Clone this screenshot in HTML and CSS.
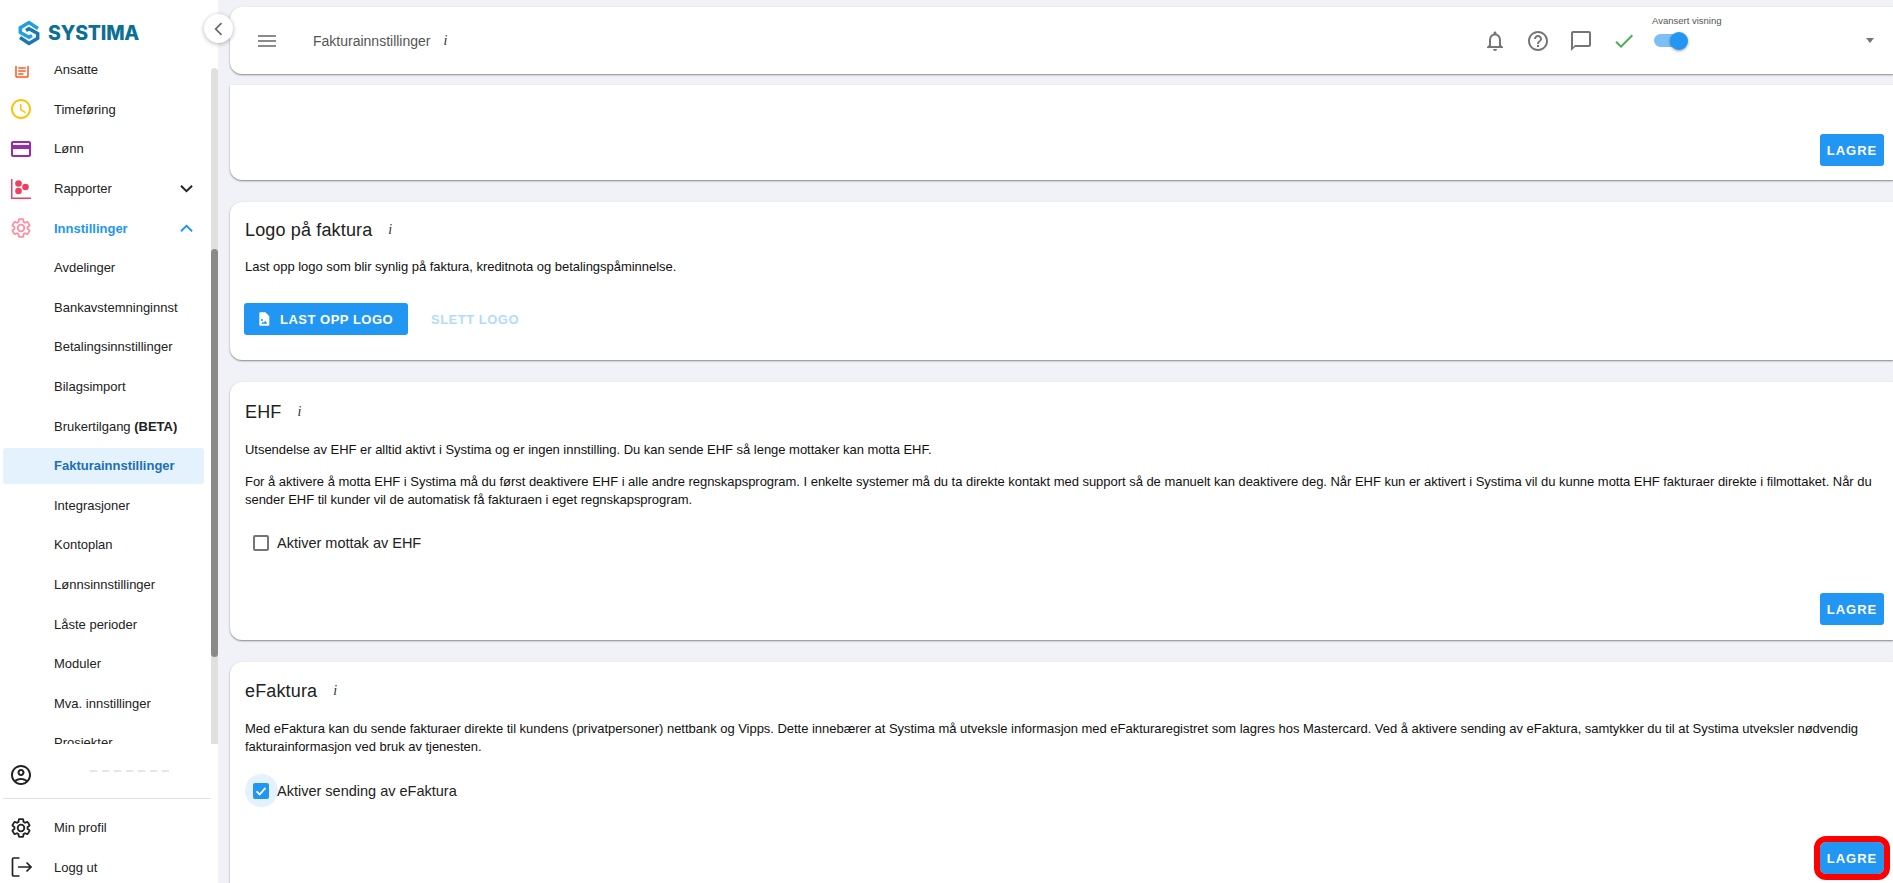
FILE: index.html
```html
<!DOCTYPE html>
<html lang="no">
<head>
<meta charset="utf-8">
<title>Fakturainnstillinger</title>
<link rel="stylesheet" href="styles.css">
</head>
<body>
<div class="app">
  <aside class="sidebar">
    <div class="brand">
      <svg class="brand-mark" viewBox="0 0 22 28" width="22" height="28"><path d="M20 9.500 11 3.600 2.300 8.800v4.700l8.700 4.800 3-1.800" fill="none" stroke="#22a0dc" stroke-width="3.500"/><path d="M2 18.500 11 24.400l8.700-5.200v-4.700L11 9.700 8 11.500" fill="none" stroke="#1878b6" stroke-width="3.500"/></svg>
      <span class="brand-name">SYSTIMA</span>
    </div>
    <button class="collapse" type="button"><svg viewBox="0 0 24 24" width="20" height="20"><path d="M15 5 8 12l7 7" fill="none" stroke="#666" stroke-width="2"/></svg></button>
    <nav class="nav">
      <ul class="nav-list">
        <li class="nav-item"><svg class="ic ic-clip" viewBox="0 0 24 24"><path d="M19 3h-4.180C14.400 1.840 13.300 1 12 1s-2.400.84-2.820 2H5c-1.100 0-2 .9-2 2v14c0 1.100.9 2 2 2h14c1.100 0 2-.9 2-2V5c0-1.100-.9-2-2-2zm-7 0c.55 0 1 .45 1 1s-.45 1-1 1-1-.45-1-1 .45-1 1-1zm7 16H5V5h14v14zM7 15h7v2H7zm0-4h10v2H7zm0-4h10v2H7z" fill="#ff5722"/></svg>Ansatte</li>
        <li class="nav-item"><svg class="ic" viewBox="0 0 24 24"><path d="M11.990 2C6.470 2 2 6.480 2 12s4.470 10 9.990 10C17.520 22 22 17.520 22 12S17.520 2 11.990 2zM12 20c-4.420 0-8-3.580-8-8s3.580-8 8-8 8 3.580 8 8-3.580 8-8 8zm.5-13H11v6l5.250 3.150.75-1.230-4.500-2.670z" fill="#ffc107"/></svg>Timeføring</li>
        <li class="nav-item"><svg class="ic" viewBox="0 0 24 24"><path d="M20 4H4c-1.110 0-1.990.89-1.990 2L2 18c0 1.110.89 2 2 2h16c1.110 0 2-.89 2-2V6c0-1.110-.89-2-2-2zm0 14H4v-6h16v6zm0-10H4V6h16v2z" fill="#9c27b0"/></svg>Lønn</li>
        <li class="nav-item"><svg class="ic" viewBox="0 0 24 24"><path d="M2 2h1.500v18.500H22V22H2z" fill="#f03e5e"/><circle cx="9.500" cy="6.500" r="3.300" fill="#f03e5e"/><circle cx="16.500" cy="10" r="3.300" fill="#f03e5e"/><circle cx="9.500" cy="14" r="3.300" fill="#f03e5e"/></svg>Rapporter<svg class="chev" viewBox="0 0 24 24"><path d="M5 8.500 12 15.500 19 8.500" fill="none" stroke="#222" stroke-width="2.400"/></svg></li>
        <li class="nav-item is-open"><svg class="ic ic-gear" viewBox="0 0 24 24"><path d="M19.140 12.940c.04-.3.06-.61.06-.94 0-.32-.02-.64-.07-.94l2.030-1.580c.18-.14.23-.41.12-.61l-1.920-3.320c-.12-.22-.37-.29-.59-.22l-2.390.96c-.5-.38-1.030-.7-1.620-.94l-.36-2.540c-.04-.24-.24-.41-.48-.41h-3.840c-.24 0-.43.17-.47.41l-.36 2.540c-.59.24-1.130.57-1.620.94l-2.390-.96c-.22-.08-.47 0-.59.22L2.740 8.870c-.12.21-.08.47.12.61l2.030 1.580c-.05.3-.09.63-.09.94s.02.64.07.94l-2.030 1.580c-.18.14-.23.41-.12.61l1.920 3.320c.12.22.37.29.59.22l2.390-.96c.5.38 1.030.7 1.620.94l.36 2.540c.05.24.24.41.48.41h3.840c.24 0 .44-.17.47-.41l.36-2.540c.59-.24 1.130-.56 1.620-.94l2.390.96c.22.08.47 0 .59-.22l1.920-3.320c.12-.22.07-.47-.12-.61l-2.010-1.580zM12 15.600c-1.980 0-3.600-1.620-3.600-3.600s1.620-3.600 3.600-3.600 3.600 1.620 3.600 3.600-1.620 3.600-3.600 3.600z" fill="none" stroke="#ff8fa3" stroke-width="2"/></svg>Innstillinger<svg class="chev" viewBox="0 0 24 24"><path d="M5 15.500 12 8.500 19 15.500" fill="none" stroke="#2196f3" stroke-width="2.400"/></svg></li>
        <li class="nav-item">Avdelinger</li>
        <li class="nav-item">Bankavstemninginnst</li>
        <li class="nav-item">Betalingsinnstillinger</li>
        <li class="nav-item">Bilagsimport</li>
        <li class="nav-item">Brukertilgang&nbsp;<b>(BETA)</b></li>
        <li class="nav-item is-active">Fakturainnstillinger</li>
        <li class="nav-item">Integrasjoner</li>
        <li class="nav-item">Kontoplan</li>
        <li class="nav-item">Lønnsinnstillinger</li>
        <li class="nav-item">Låste perioder</li>
        <li class="nav-item">Moduler</li>
        <li class="nav-item">Mva. innstillinger</li>
        <li class="nav-item">Prosjekter</li>
      </ul>
      <div class="scrollbar"><div class="thumb"></div></div>
    </nav>
    <div class="user-panel">
      <div class="user-row"><svg class="ic" viewBox="0 0 24 24"><path d="M12 2C6.480 2 2 6.480 2 12s4.480 10 10 10 10-4.480 10-10S17.520 2 12 2zM7.350 18.500C8.660 17.560 10.260 17 12 17s3.340.56 4.650 1.500c-1.310.94-2.910 1.500-4.650 1.500s-3.340-.56-4.650-1.500zm10.790-1.380C16.450 15.800 14.320 15 12 15s-4.450.8-6.140 2.120C4.700 15.730 4 13.950 4 12c0-4.420 3.580-8 8-8s8 3.580 8 8c0 1.950-.7 3.730-1.860 5.120zM12 6c-1.930 0-3.500 1.570-3.500 3.500S10.070 13 12 13s3.500-1.570 3.500-3.500S13.930 6 12 6zm0 5c-.83 0-1.500-.67-1.500-1.500S11.170 8 12 8s1.500.67 1.500 1.500S12.830 11 12 11z" fill="#222"/></svg><span class="user-blur"></span></div>
      <div class="user-links">
        <div class="user-link"><svg class="ic ic-gear" viewBox="0 0 24 24"><path d="M19.140 12.940c.04-.3.06-.61.06-.94 0-.32-.02-.64-.07-.94l2.030-1.580c.18-.14.23-.41.12-.61l-1.920-3.320c-.12-.22-.37-.29-.59-.22l-2.390.96c-.5-.38-1.030-.7-1.620-.94l-.36-2.540c-.04-.24-.24-.41-.48-.41h-3.840c-.24 0-.43.17-.47.41l-.36 2.540c-.59.24-1.130.57-1.620.94l-2.390-.96c-.22-.08-.47 0-.59.22L2.740 8.870c-.12.21-.08.47.12.61l2.030 1.580c-.05.3-.09.63-.09.94s.02.64.07.94l-2.030 1.580c-.18.14-.23.41-.12.61l1.920 3.320c.12.22.37.29.59.22l2.390-.96c.5.38 1.030.7 1.620.94l.36 2.540c.05.24.24.41.48.41h3.840c.24 0 .44-.17.47-.41l.36-2.540c.59-.24 1.130-.56 1.620-.94l2.390.96c.22.08.47 0 .59-.22l1.920-3.320c.12-.22.07-.47-.12-.61l-2.010-1.580zM12 15.600c-1.980 0-3.600-1.620-3.600-3.600s1.620-3.600 3.600-3.600 3.600 1.620 3.600 3.600-1.620 3.600-3.600 3.600z" fill="none" stroke="#222" stroke-width="2"/></svg>Min profil</div>
        <div class="user-link"><svg class="ic" viewBox="0 0 24 24"><path d="M10.500 3H4.500a1 1 0 0 0-1 1v16a1 1 0 0 0 1 1h6M9 12h13M17.500 7.500 22 12l-4.500 4.500" fill="none" stroke="#222" stroke-width="1.700"/></svg>Logg ut</div>
      </div>
    </div>
  </aside>
  <main class="main">
    <header class="topbar">
      <svg class="menu" viewBox="0 0 18 12" width="18" height="12"><path d="M0 1h18M0 6h18M0 11h18" stroke="#666" stroke-width="1.500"/></svg>
      <span class="page-title">Fakturainnstillinger</span>
      <i class="info info-top">i</i>
      <div class="top-actions">
        <svg class="top-ic" viewBox="0 0 24 24"><path d="M12 22c1.100 0 2-.9 2-2h-4c0 1.100.9 2 2 2zm6-6v-5c0-3.070-1.630-5.640-4.500-6.320V4c0-.83-.67-1.500-1.500-1.500s-1.500.67-1.500 1.500v.68C7.640 5.360 6 7.920 6 11v5l-2 2v1h16v-1l-2-2zm-2 1H8v-6c0-2.480 1.510-4.500 4-4.500s4 2.020 4 4.500v6z" fill="#757575"/></svg>
        <svg class="top-ic" viewBox="0 0 24 24"><path d="M11 18h2v-2h-2v2zm1-16C6.480 2 2 6.480 2 12s4.480 10 10 10 10-4.480 10-10S17.520 2 12 2zm0 18c-4.410 0-8-3.590-8-8s3.590-8 8-8 8 3.590 8 8-3.590 8-8 8zm0-14c-2.210 0-4 1.790-4 4h2c0-1.100.9-2 2-2s2 .9 2 2c0 2-3 1.750-3 5h2c0-2.250 3-2.500 3-5 0-2.210-1.790-4-4-4z" fill="#757575"/></svg>
        <svg class="top-ic" viewBox="0 0 24 24"><path d="M20 2H4c-1.100 0-2 .9-2 2v18l4-4h14c1.100 0 2-.9 2-2V4c0-1.100-.9-2-2-2zm0 14H6l-2 2V4h16v12z" fill="#757575"/></svg>
        <svg class="top-ic" viewBox="0 0 24 24"><path d="M9 16.170 4.830 12l-1.420 1.410L9 19 21 7l-1.410-1.410z" fill="#4caf50"/></svg>
        <div class="adv">
          <span class="adv-label">Avansert visning</span>
          <span class="switch"><span class="knob"></span></span>
        </div>
        <span class="caret"></span>
      </div>
    </header>
    <section class="card card-first">
      <div class="card-foot"><button class="btn" type="button">LAGRE</button></div>
    </section>
    <section class="card card-logo">
      <h2 class="card-title">Logo på faktura<i class="info">i</i></h2>
      <p class="text">Last opp logo som blir synlig på faktura, kreditnota og betalingspåminnelse.</p>
      <div class="logo-actions">
        <button class="btn btn-icon" type="button"><svg viewBox="0 0 24 24" width="16" height="16"><path d="M6 2h8l6 6v13a1 1 0 0 1-1 1H6a1 1 0 0 1-1-1V3a1 1 0 0 1 1-1zm2 17h9l-3-4.500-2.500 3-1.500-1.500zm1-7a1.500 1.500 0 1 0 0 3 1.500 1.500 0 0 0 0-3z" fill="#fff" fill-rule="evenodd"/></svg>LAST OPP LOGO</button>
        <button class="btn-text" type="button">SLETT LOGO</button>
      </div>
    </section>
    <section class="card card-ehf">
      <h2 class="card-title">EHF<i class="info">i</i></h2>
      <p class="text">Utsendelse av EHF er alltid aktivt i Systima og er ingen innstilling. Du kan sende EHF så lenge mottaker kan motta EHF.</p>
      <p class="text">For å aktivere å motta EHF i Systima må du først deaktivere EHF i alle andre regnskapsprogram. I enkelte systemer må du ta direkte kontakt med support så de manuelt kan deaktivere deg. Når EHF kun er aktivert i Systima vil du kunne motta EHF fakturaer direkte i filmottaket. Når du sender EHF til kunder vil de automatisk få fakturaen i eget regnskapsprogram.</p>
      <label class="check"><span class="box"></span>Aktiver mottak av EHF</label>
      <div class="card-foot"><button class="btn" type="button">LAGRE</button></div>
    </section>
    <section class="card card-efaktura">
      <h2 class="card-title">eFaktura<i class="info">i</i></h2>
      <p class="text">Med eFaktura kan du sende fakturaer direkte til kundens (privatpersoner) nettbank og Vipps. Dette innebærer at Systima må utveksle informasjon med eFakturaregistret som lagres hos Mastercard. Ved å aktivere sending av eFaktura, samtykker du til at Systima utveksler nødvendig fakturainformasjon ved bruk av tjenesten.</p>
      <label class="check"><span class="box box-on"><svg viewBox="0 0 18 18" width="16" height="16"><path d="M4 9.500 7.500 13 14 5.500" fill="none" stroke="#fff" stroke-width="2"/></svg></span>Aktiver sending av eFaktura</label>
      <div class="card-foot"><button class="btn btn-marked" type="button">LAGRE</button></div>
    </section>
  </main>
</div>
</body>
</html>
```
FILE: styles.css
```css
* { box-sizing: border-box; }
html, body { margin: 0; height: 100%; overflow: hidden; }
body { font-family: "Liberation Sans", Arial, sans-serif; color: #222; background: #f0f2f8; }
.app { display: flex; height: 883px; width: 1893px; overflow: hidden; }

.sidebar { position: relative; z-index: 2; flex: 0 0 218px; display: flex; flex-direction: column; background: #fff; }
.brand { flex: 0 0 66px; display: flex; align-items: center; gap: 8px; padding: 0 0 1px 18px; }
.brand-name { font-family: Inter, "Liberation Sans", sans-serif; font-size: 19.5px; font-weight: 800; letter-spacing: -.2px; color: #0c6f96; }
.collapse { position: absolute; top: 14px; left: 204px; width: 29px; height: 29px; padding: 0; display: flex; align-items: center; justify-content: center; border: 0; border-radius: 50%; background: #fff; box-shadow: 0 1px 4px rgba(0,0,0,.3); }

.nav { position: relative; flex: 1; min-height: 0; overflow: hidden; }
.nav-list { list-style: none; margin: -16px 0 0; padding: 0 0 0 3px; }
.nav-item { position: relative; display: flex; align-items: center; height: 39.6px; width: 201px; padding-left: 51px; font-size: 13px; color: #222; }
.ic { position: absolute; left: 6px; width: 24px; height: 24px; }
.ic-gear { left: 7px; width: 22px; height: 22px; }
.ic-clip { left: 10px; width: 18px; height: 18px; margin-top: 2px; }
.chev { position: absolute; right: 8px; width: 19px; height: 19px; }
.is-open { color: #2196f3; font-weight: 700; }
.is-active { background: #e3f2fd; color: #1d6fb5; font-weight: 700; border-radius: 3px; height: 36px; margin: 1.8px 0; }
.scrollbar { position: absolute; top: 2px; bottom: 0; left: 211px; width: 7px; background: #e0e0e0; border-radius: 4px 4px 0 0; }
.thumb { margin-top: 181px; height: 408px; background: #8a8a8a; border-radius: 4px; }

.user-panel { flex: 0 0 139px; display: flex; flex-direction: column; overflow: hidden; background: #fff; border-radius: 12px 12px 0 0; padding-left: 3px; }
.user-row { position: relative; display: flex; align-items: center; flex: 0 0 55px; padding-top: 8px; margin-right: 7px; border-bottom: 1px solid #e0e0e0; }
.user-blur { position: absolute; top: 26px; left: 87px; width: 82px; height: 2px; background: repeating-linear-gradient(90deg, #e6e6e6 0 7px, #fff 7px 12px); }
.user-links { padding-top: 9px; }
.user-link { position: relative; display: flex; align-items: center; height: 39.6px; padding-left: 51px; font-size: 13px; color: #222; }

.main { flex: 1; min-width: 0; padding: 7px 0 0 12px; overflow: hidden; }
.topbar { display: flex; align-items: center; height: 67px; padding-left: 28px; margin-bottom: 11px; background: #fff; border-radius: 12px 0 0 12px; box-shadow: 0 1px 2px rgba(0,0,0,.45); }
.page-title { margin-left: 37px; font-size: 14px; color: #555; }
.info { font-family: "Liberation Serif", serif; font-style: italic; font-weight: 400; font-size: 14px; color: #333; }
.info-top { margin-left: 13px; }
.top-actions { margin-left: auto; display: flex; align-items: center; }
.top-ic { width: 24px; height: 24px; margin-right: 19px; }
.adv { position: relative; width: 70px; height: 40px; margin: -1px 0 0 -3px; }
.adv-label { position: absolute; top: -5px; left: 0; white-space: nowrap; font-size: 9.5px; color: #555; }
.switch { position: absolute; top: 14px; left: 2px; width: 26px; height: 13px; background: #7dbff5; border-radius: 7px; }
.knob { position: absolute; top: -2.5px; left: 16px; width: 18px; height: 18px; background: #2196f3; border-radius: 50%; box-shadow: 0 1px 3px rgba(0,0,0,.4); }
.caret { margin: 0 19.5px 0 143.5px; width: 0; height: 0; border: 4.5px solid transparent; border-top: 5px solid #757575; border-bottom: 0; }

.card { position: relative; margin-bottom: 22px; padding: 0 15px; background: #fff; border-radius: 12px 0 0 12px; box-shadow: 0 1px 2px rgba(0,0,0,.45); }
.card-first { height: 95px; border-radius: 0 0 0 12px; }
.card-logo { height: 158px; padding-top: 16px; }
.card-ehf { height: 258px; padding-top: 18px; }
.card-efaktura { height: 260px; padding-top: 17px; border-radius: 12px 0 0 0; }
.card-foot { position: absolute; right: 9px; display: flex; }
.card-first .card-foot { top: 49px; }
.card-ehf .card-foot { bottom: 15px; }
.card-efaktura .card-foot { top: 180px; }
.card-title { display: flex; align-items: center; margin: 0 0 16.5px; font-size: 18px; font-weight: 400; color: #222; line-height: 24px; letter-spacing: .15px; }
.card-logo .card-title { margin-bottom: 15.5px; }
.card-title .info { margin-left: 16px; letter-spacing: 0; }
.text { margin: 0 0 15px; font-size: 13px; line-height: 18px; color: #111; letter-spacing: -.03px; }
.text + .text { margin-top: -1px; }
.btn { display: inline-flex; align-items: center; justify-content: center; height: 32px; width: 64px; padding: 0; border: 0; border-radius: 3px; background: #2196f3; color: #fff; font: 700 13px "Liberation Sans", sans-serif; letter-spacing: 1px; }
.btn-icon { width: 164px; justify-content: flex-start; padding: 0 12px; gap: 8px; letter-spacing: .5px; }
.btn-text { padding: 0 23px; border: 0; background: none; color: #b3dbfb; font: 700 13px "Liberation Sans", sans-serif; letter-spacing: .5px; }
.logo-actions { display: flex; margin: 27.5px 0 0 -1px; }
.btn-marked { outline: 6px solid #f00; outline-offset: 0; border-radius: 6px; }
.check { position: relative; isolation: isolate; display: flex; align-items: center; height: 32px; font-size: 14.5px; margin: 18px 0 0 8px; color: #222; }
.card-efaktura .check { margin-top: 19px; }
.box { position: relative; display: flex; width: 16px; height: 16px; margin-right: 8px; border: 2px solid #757575; border-radius: 2px; }
.box-on { border: 0; background: #2196f3; }
.box-on::before { content: ""; position: absolute; top: -8.5px; left: -8.5px; width: 33px; height: 33px; border-radius: 50%; background: #e3f2fd; z-index: -1; }
```
